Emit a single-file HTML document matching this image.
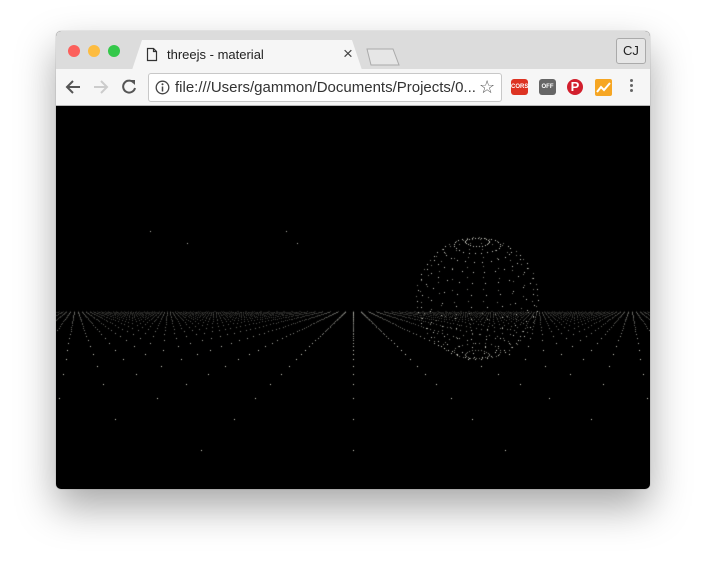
<!DOCTYPE html>
<html><head><meta charset="utf-8"><style>
html,body{margin:0;padding:0;width:706px;height:569px;background:#fff;overflow:hidden;font-family:"Liberation Sans",sans-serif}
.win{position:absolute;left:56px;top:31px;width:594px;height:458px;border-radius:5px;overflow:hidden;box-shadow:0 18px 40px rgba(0,0,0,.35),0 0 1px rgba(0,0,0,.4);background:#000}
.title{position:absolute;left:0;top:0;width:594px;height:38px;background:#dcdcdc}
.dot{position:absolute;top:14px;width:12px;height:12px;border-radius:50%}
.tab{position:absolute;left:76px;top:9px;width:230px;height:30px;background:#f6f6f6;clip-path:polygon(0 100%,10px 0,calc(100% - 10px) 0,100% 100%)}
.tb{position:absolute;left:0;top:38px;width:594px;height:36px;background:#f6f6f6;border-bottom:1px solid #b8b8b8}
.url{position:absolute;left:92px;top:4px;width:352px;height:27px;border:1px solid #c8c8c8;border-radius:3px;background:#fff;font-size:15px;color:#333;line-height:27px}
canvas{position:absolute;left:0;top:75px}
</style></head><body>
<div class="win">
 <div class="title">
  <div class="dot" style="left:12px;background:#fc605c"></div>
  <div class="dot" style="left:32px;background:#fdbc40"></div>
  <div class="dot" style="left:52px;background:#34c84a"></div>
  <div class="tab"></div>
  <svg style="position:absolute;left:90px;top:16px" width="12" height="15"><path d="M1.5 1.5h6l3 3v9h-9z M7.5 1.5v3h3" fill="none" stroke="#333" stroke-width="1.2"/></svg>
  <div style="position:absolute;left:111px;top:16px;font-size:13px;color:#222">threejs - material</div>
  <div style="position:absolute;left:287px;top:13px;font-size:17px;color:#444">×</div>
  <svg style="position:absolute;left:309px;top:17px" width="36" height="18"><path d="M2 1h26l6 16H6z" fill="#e6e6e6" stroke="#aaa"/></svg>
  <div style="position:absolute;left:560px;top:7px;width:28px;height:24px;border:1px solid #aaa;border-radius:3px;background:#e6e6e6;font-size:13px;line-height:24px;text-align:center;color:#222">CJ</div>
 </div>
 <div class="tb">
  <svg style="position:absolute;left:8px;top:9px" width="18" height="18"><path d="M16 9H3M9 3L3 9l6 6" fill="none" stroke="#555" stroke-width="2"/></svg>
  <svg style="position:absolute;left:36px;top:9px" width="18" height="18"><path d="M2 9h13M9 3l6 6-6 6" fill="none" stroke="#ccc" stroke-width="2"/></svg>
  <svg style="position:absolute;left:64px;top:9px" width="18" height="18"><path d="M14 5A6 6 0 1 0 15 10" fill="none" stroke="#555" stroke-width="2"/><path d="M10 2h5v5z" fill="#555"/></svg>
  <div class="url">
   <svg style="position:absolute;left:6px;top:6px" width="15" height="15"><circle cx="7.5" cy="7.5" r="6.3" fill="none" stroke="#444" stroke-width="1.3"/><path d="M7.5 6.5v5" stroke="#444" stroke-width="1.5"/><circle cx="7.5" cy="4.3" r="1" fill="#444"/></svg>
   <span style="position:absolute;left:26px">file:///Users/gammon/Documents/Projects/0...</span>
   <span style="position:absolute;left:330px;top:0;font-size:18px;color:#555">☆</span>
  </div>
  <div style="position:absolute;left:455px;top:10px;width:17px;height:16px;background:#d32;border-radius:3px;color:#fff;font-size:6px;line-height:16px;text-align:center;font-weight:bold">CORS</div>
  <div style="position:absolute;left:483px;top:10px;width:17px;height:16px;background:#666;border-radius:3px;color:#fff;font-size:6px;line-height:16px;text-align:center;font-weight:bold">OFF</div>
  <div style="position:absolute;left:511px;top:10px;width:16px;height:16px;background:#d21f2d;border-radius:50%;color:#fff;font-size:13px;line-height:16px;text-align:center;font-weight:bold">P</div>
  <svg style="position:absolute;left:539px;top:10px" width="17" height="17"><rect width="17" height="17" rx="2" fill="#f6a623"/><path d="M2 13l4-5 3 3 6-7" fill="none" stroke="#fff" stroke-width="2"/></svg>
  <div style="position:absolute;left:574px;top:10px;width:3px">
   <div style="width:3px;height:3px;background:#666;border-radius:50%;margin-bottom:2px"></div><div style="width:3px;height:3px;background:#666;border-radius:50%;margin-bottom:2px"></div><div style="width:3px;height:3px;background:#666;border-radius:50%"></div></div>
 </div>
 <canvas id="c" width="594" height="383"></canvas>
</div>
<script>
var c=document.getElementById('c').getContext('2d');
var oy=105,ox=56;
function p(x,y,a){c.fillStyle='rgba(220,220,210,'+a+')';c.fillRect(Math.round(x-ox),Math.round(y-oy),1,1);}
for(var n=0;n<70;n++){var s=1/(1+0.273*n);var y=303+146*s;var a=Math.min(0.95,s*3);
 for(var k=-40;k<=40;k++){var x=353+151.6*k*s; if(x<56||x>650)continue; p(x,y,a);}}
[[150,230],[187,242],[286,230],[297,242]].forEach(function(q){p(q[0],q[1],0.8);});
var cx=477,cy=297,r=61,t=0.35,ct=Math.cos(t),st=Math.sin(t);
for(var i=1;i<16;i++){var th=Math.PI*i/16;
 for(var j=0;j<24;j++){var ph=2*Math.PI*j/24+0.1;
  var X=Math.sin(th)*Math.cos(ph),Y=Math.cos(th),Z=Math.sin(th)*Math.sin(ph);
  var Y2=Y*ct-Z*st,Z2=Y*st+Z*ct;
  p(cx+r*X,cy-r*Y2,Z2>0?0.9:0.55);}}
</script>
</body></html>
